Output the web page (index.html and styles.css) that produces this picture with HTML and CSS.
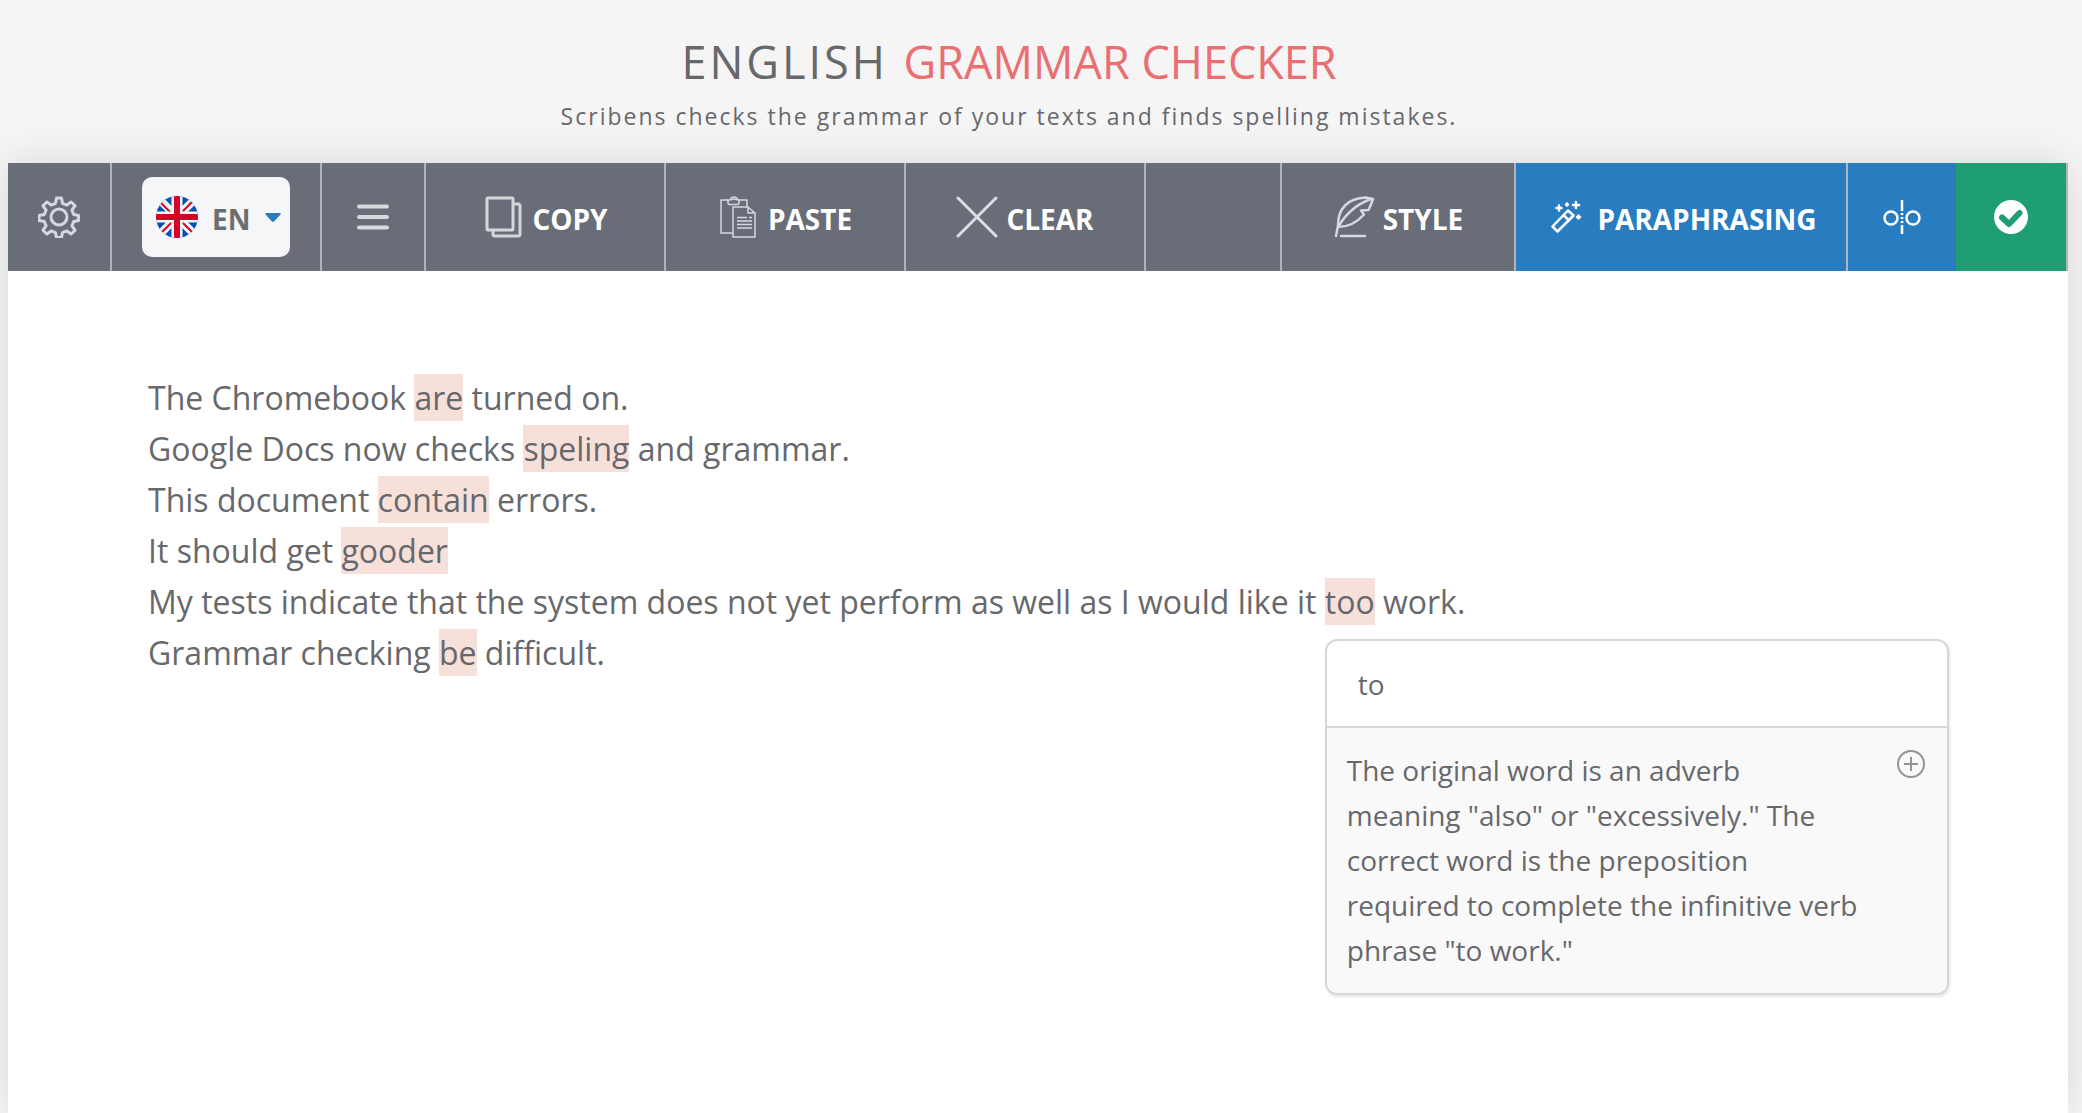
FILE: index.html
```
<!DOCTYPE html>
<html lang="en">
<head>
  <meta charset="utf-8">
  <title>English Grammar Checker</title>
  <link rel="stylesheet" href="styles.css">
</head>
<body>
  <header class="header">
    <h1><span class="lang-name">English</span> <span class="product">Grammar Checker</span></h1>
    <p class="tagline">Scribens checks the grammar of your texts and finds spelling mistakes.</p>
  </header>

  <main class="panel">
    <div class="toolbar">
      <button type="button" class="tool small" aria-label="Settings">
        <svg width="42" height="42" viewBox="0 0 42 42" fill="none" stroke="#d5d8e2" stroke-width="3" stroke-linejoin="round">
          <circle cx="21" cy="21" r="8"/>
          <path d="M18.500 2h5l1 5.300 4.300 1.800 4.400-3.100 3.800 3.800-3.100 4.400 1.800 4.300 4.800 1v5l-4.800 1-1.800 4.300 3.100 4.400-3.800 3.800-4.400-3.100-4.300 1.800-1 4.800h-5l-1-4.800-4.300-1.800-4.400 3.100-3.800-3.800 3.100-4.400-1.800-4.300-5.300-1v-5l5.300-1 1.800-4.300-3.100-4.400 3.800-3.800 4.400 3.100 4.300-1.800z"/>
        </svg>
      </button>
      <div class="tool lang">
        <label class="lang-box">
          <svg width="42" height="42" viewBox="0 0 42 42">
            <clipPath id="round"><circle cx="21" cy="21" r="21"/></clipPath>
            <g clip-path="url(#round)">
              <path fill="#0052b4" d="M0 0h42v42H0z"/>
              <path stroke="#f5f5f5" stroke-width="8" d="M0 0l42 42M42 0L0 42"/>
              <path stroke="#d80027" stroke-width="2" d="M4 6l12 12M37 5L25 17M5 37l11-11M26 26l11 11"/>
              <path stroke="#f5f5f5" stroke-width="11" d="M21 0v42M0 21h42"/>
              <path stroke="#d80027" stroke-width="6" d="M21 0v42M0 21h42"/>
            </g>
          </svg>
          <select aria-label="Language">
            <option>EN</option>
            <option>FR</option>
            <option>ES</option>
          </select>
          <svg class="caret" width="16" height="9" viewBox="0 0 16 9"><path fill="#287cc0" d="M1 0h14q1 0 .500 1.500L9 8.500q-1 .8-2 0L.500 1.500Q0 0 1 0z"/></svg>
        </label>
      </div>
      <button type="button" class="tool small" aria-label="Menu">
        <svg width="32" height="28" viewBox="0 0 32 28" stroke="#d9dae0" stroke-width="4" stroke-linecap="round"><path d="M2 3.500h28M2 14h28M2 24.500h28"/></svg>
      </button>
      <button type="button" class="tool medium">
        <svg width="42" height="42" viewBox="0 0 42 42" fill="none" stroke="#d3d7da" stroke-width="3" stroke-linejoin="round">
          <rect x="5" y="2" width="26" height="32" rx="1"/>
          <path d="M31 8h5q2 0 2 2v28q0 2-2 2H13q-2 0-2-2v-4"/>
        </svg>
        <span>Copy</span>
      </button>
      <button type="button" class="tool medium">
        <svg width="42" height="42" viewBox="0 0 42 42" fill="none" stroke="#d3d7e0" stroke-width="1.500" stroke-linejoin="round">
          <path d="M10 4H3v33h12M21 4h8v7"/>
          <path d="M10 4h2q1-3 4-3t4 3h1v3q0 1.500-1.500 1.500h-8Q10 8.500 10 7zM13 4q3-2 6 0"/>
          <path d="M15 11h15l7 6v24H15zM30 11v6h7"/>
          <path d="M19 21.500h10M31 21.500h3M19 25h15M19 28.500h15M19 32h15"/>
        </svg>
        <span>Paste</span>
      </button>
      <button type="button" class="tool medium">
        <svg width="42" height="42" viewBox="0 0 42 42" stroke="#dcdde5" stroke-width="3" stroke-linecap="round"><path d="M2 2l38 38M40 2L2 40"/></svg>
        <span>Clear</span>
      </button>
      <div class="tool spacer"></div>
      <button type="button" class="tool style">
        <svg width="42" height="42" viewBox="0 0 42 42" fill="none" stroke="#d5d8e2" stroke-width="2.500" stroke-linecap="round" stroke-linejoin="round">
          <path d="M3 40l2-10Q5 3 33 1.500L40 3q-2 6-4.500 11L28 14.500l3 4Q20 31 5 31"/>
          <path d="M5 31Q11 21 19 14T38 3"/>
          <path d="M8 40h24"/>
        </svg>
        <span>Style</span>
      </button>
      <button type="button" class="tool blue paraphrase">
        <svg width="32" height="34" viewBox="0 0 32 34" fill="none" stroke="#fff" stroke-width="2.500" stroke-linejoin="round" stroke-linecap="round">
          <path d="M1.500 26.500L17 10.500l5.500 5L6.500 31.500zM12.500 15l5.500 5.500"/>
          <path d="M8 5.500v5M5.500 8h5M16 3.500v2M15 4.500h2M25 2v6M22 5h6M27.500 15.500v3M26 17h3"/>
        </svg>
        <span>Paraphrasing</span>
      </button>
      <button type="button" class="tool blue compare" aria-label="Compare">
        <svg width="38" height="34" viewBox="0 0 38 34" fill="none" stroke="#fff" stroke-width="2.500">
          <circle cx="8" cy="18" r="6.500"/>
          <circle cx="30" cy="18" r="6.500"/>
          <path d="M19 0v11M19 25v9"/>
          <path stroke-dasharray="2 2" d="M19 13v10"/>
        </svg>
      </button>
      <button type="button" class="tool green" aria-label="Check">
        <svg width="34" height="34" viewBox="0 0 34 34" fill="none">
          <circle cx="17" cy="17" r="17" fill="#fff"/>
          <path stroke="#1f9e73" stroke-width="6" stroke-linecap="round" stroke-linejoin="round" d="M8 17.500l7 6.500L25.500 13"/>
        </svg>
      </button>
    </div>

    <div class="editor" contenteditable="true" spellcheck="false">
      <div>The Chromebook <mark>are</mark> turned on.</div>
      <div>Google Docs now checks <mark>speling</mark> and grammar.</div>
      <div>This document <mark>contain</mark> errors.</div>
      <div>It should get <mark>gooder</mark></div>
      <div>My tests indicate that the system does not yet perform as well as I would like it <span class="anchor"><mark>too</mark><div class="popup" contenteditable="false">
        <button type="button" class="suggestion">to</button>
        <div class="explanation">
          <p>The original word is an adverb meaning "also" or "excessively." The correct word is the preposition required to complete the infinitive verb phrase "to work."</p>
          <button type="button" class="more" aria-label="More">
            <svg width="28" height="28" viewBox="0 0 28 28" fill="none" stroke="#929497" stroke-width="2"><circle cx="14" cy="14" r="13"/><path d="M14 7v14M7 14h14"/></svg>
          </button>
        </div>
      </div></span> work.</div>
      <div>Grammar checking <mark>be</mark> difficult.</div>
    </div>
  </main>
</body>
</html>
```
FILE: styles.css
```
* {
  box-sizing: border-box;
}

body {
  margin: 0;
  min-height: 100vh;
  display: flex;
  flex-direction: column;
  background-color: #f5f5f5;
  color: #67686c;
  font-family: "Segoe UI", "Open Sans", "Noto Sans", sans-serif;
}

button, select {
  font-family: inherit;
  color: inherit;
  border: none;
  background: none;
  padding: 0;
  cursor: pointer;
}

svg {
  display: block;
  flex-shrink: 0;
}

.header {
  height: 163px;
  padding: 30px 64px 0 0;
  text-align: center;
}

h1 {
  margin: 0;
  font-size: 45px;
  line-height: 64px;
  font-weight: 400;
  text-transform: uppercase;
}

.lang-name {
  margin-right: 4px;
  letter-spacing: 3px;
}

.product {
  color: #e96f73;
}

.tagline {
  margin: 4px 0 0;
  font-size: 23px;
  line-height: 36px;
  letter-spacing: 2px;
}

.panel {
  flex: 1;
  margin: 0 14px 0 8px;
  background-color: #fff;
  box-shadow: 0 0 40px rgba(0,0,0,0.12);
}

.toolbar {
  display: flex;
  height: 108px;
  background-color: #696d78;
}

.tool {
  display: flex;
  align-items: center;
  justify-content: center;
  gap: 8px;
  border-right: 2px solid #b1b3be;
  color: #fff;
  font-size: 28px;
  font-weight: bold;
  text-transform: uppercase;
}

.tool span {
  padding-top: 3px;
}

.small {
  width: 104px;
}

.lang {
  width: 210px;
}

.medium {
  width: 240px;
}

.spacer {
  flex: 1;
}

.style {
  width: 234px;
}

.paraphrase {
  width: 332px;
  gap: 14px;
  padding-left: 6px;
}

.compare {
  width: 108px;
  border-right: none;
}

.blue {
  background-color: #287cc0;
}

.green {
  width: 112px;
  background-color: #1f9e73;
}

.lang-box {
  display: flex;
  align-items: center;
  gap: 14px;
  width: 148px;
  height: 80px;
  padding: 0 10px 0 14px;
  border-radius: 10px;
  background-color: #f5f6f7;
}

.lang-box select {
  appearance: none;
  flex: 1;
  padding-top: 3px;
  font-size: 28px;
  font-weight: bold;
  color: #6c6d70;
}

.editor {
  padding: 101px 140px;
  font-size: 32px;
  line-height: 51px;
  outline: none;
}

mark {
  padding: 2px 0;
  background-color: #f8e0da;
  color: inherit;
}

.anchor {
  position: relative;
}

.popup {
  position: absolute;
  top: 100%;
  left: 0;
  width: 624px;
  margin-top: 16px;
  border: 2px solid #d6d7da;
  border-radius: 12px;
  background-color: #fff;
  box-shadow: 1px 2px 3px rgba(0,0,0,0.1);
  overflow: hidden;
  font-size: 28px;
  line-height: 45px;
}

.suggestion {
  display: block;
  width: 100%;
  height: 87px;
  padding-left: 31px;
  border-bottom: 2px solid #d6d7da;
  font-size: 28px;
  text-align: left;
}

.explanation {
  display: flex;
  align-items: flex-start;
  justify-content: space-between;
  padding: 20px 22px 20px 20px;
  background-color: #f9f9f9;
}

.explanation p {
  width: 513px;
  margin: 0;
}

.more {
  margin-top: 2px;
}
```
